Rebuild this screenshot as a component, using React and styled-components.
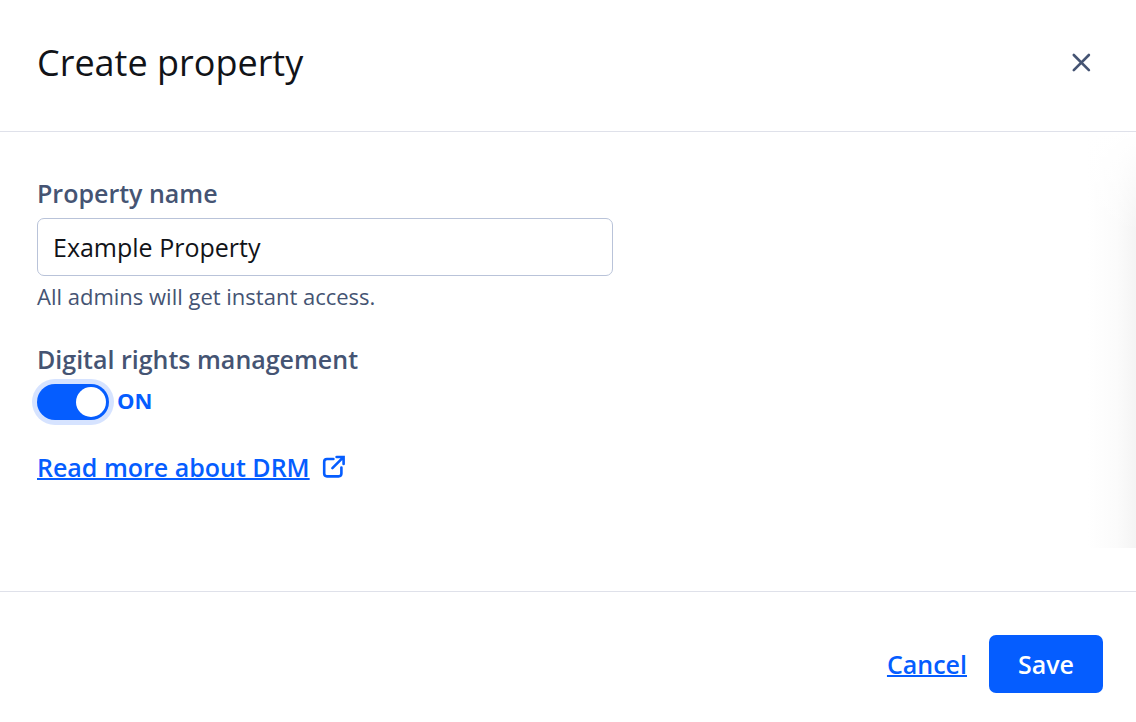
import React, { useState } from "react";
import styled, { createGlobalStyle, css } from "styled-components";

export default function App() {
  const [name, setName] = useState("Example Property");
  const [drm, setDrm] = useState(true);

  return (
    <>
      <GlobalStyle />
      <Panel onSubmit={(e) => e.preventDefault()}>
        <Header>
          <Title>Create property</Title>
          <CloseButton type="button" aria-label="Close">
            <svg width="20" height="20" viewBox="0 0 20 20" fill="none">
              <path
                d="M2.8 2L17.9 17.2M17.9 2L2.8 17.2"
                stroke="currentColor"
                strokeWidth="2.6"
                strokeLinecap="round"
              />
            </svg>
          </CloseButton>
        </Header>

        <Body>
          <Label htmlFor="property-name">Property name</Label>
          <TextInput
            id="property-name"
            value={name}
            onChange={(e) => setName(e.target.value)}
          />
          <Hint>All admins will get instant access.</Hint>

          <Label htmlFor="drm">Digital rights management</Label>
          <SwitchRow>
            <Switch
              id="drm"
              type="checkbox"
              role="switch"
              checked={drm}
              onChange={(e) => setDrm(e.target.checked)}
            />
            <SwitchState $on={drm}>{drm ? "ON" : "OFF"}</SwitchState>
          </SwitchRow>

          <DocsLink href="#drm">
            <span>Read more about DRM</span>
            <svg width="24" height="24" viewBox="0 0 24 24" fill="none">
              <path
                d="M11.4 4H5Q2.2 4 2.2 6.8V18.6Q2.2 21.4 5 21.4H16.6Q19.4 21.4 19.4 18.6V12.6M14.6 2H21.6V9M21.4 2.2L10.4 13.2"
                stroke="currentColor"
                strokeWidth="2.6"
                strokeLinecap="round"
              />
            </svg>
          </DocsLink>
        </Body>

        <Footer>
          <CancelLink href="#cancel">Cancel</CancelLink>
          <SaveButton type="submit">Save</SaveButton>
        </Footer>
      </Panel>
    </>
  );
}

const GlobalStyle = createGlobalStyle`
  * {
    box-sizing: border-box;
  }

  body {
    margin: 0;
    background: #ffffff;
    color: #111318;
    font-family: "Open Sans", sans-serif;
  }
`;

const Panel = styled.form`
  display: flex;
  flex-direction: column;
  min-height: 100vh;
`;

const Header = styled.header`
  display: flex;
  align-items: center;
  justify-content: space-between;
  padding: 37px 45px 42px 37px;
  border-bottom: 1px solid #dfe1ea;
`;

const Title = styled.h1`
  margin: 0;
  font-size: 36px;
  font-weight: 400;
  line-height: 52px;
`;

const CloseButton = styled.button`
  display: flex;
  padding: 0;
  border: 0;
  background: none;
  color: #455473;
  cursor: pointer;
`;

const Body = styled.main`
  display: flex;
  flex-direction: column;
  align-items: flex-start;
  flex: 1;
  padding: 44px 37px;
  background:
    linear-gradient(to bottom, #ffffff, #ffffff00) right top / 48px 100px no-repeat,
    linear-gradient(to left, #f4f4f4, #fbfbfb 40%, #ffffff) right top / 48px calc(100% - 43px) no-repeat;
`;

const Label = styled.label`
  color: #455473;
  font-size: 25px;
  font-weight: 600;
  line-height: 34px;
`;

const TextInput = styled.input`
  width: 576px;
  max-width: 100%;
  height: 58px;
  margin: 8px 0 6px;
  padding: 0 15px;
  border: 1px solid #b9c3d9;
  border-radius: 7px;
  background: #ffffff;
  color: #111318;
  font: inherit;
  font-size: 25px;
  outline: none;
`;

const Hint = styled.p`
  margin: 0 0 32px;
  color: #455473;
  font-size: 22px;
  line-height: 28px;
`;

const SwitchRow = styled.div`
  display: flex;
  align-items: flex-start;
  gap: 8px;
  margin: 8px 0 30px;
`;

const Switch = styled.input`
  display: flex;
  align-items: center;
  width: 72px;
  height: 36px;
  margin: 0;
  padding: 0 3px;
  appearance: none;
  border-radius: 18px;
  background: #055dff;
  box-shadow: 0 0 0 5px #d6e3ff;
  cursor: pointer;

  &::before {
    content: "";
    width: 30px;
    height: 30px;
    border-radius: 50%;
    background: #ffffff;
  }

  &:checked {
    justify-content: flex-end;
  }

  &:not(:checked) {
    background: #8891a8;
  }
`;

const SwitchState = styled.span`
  color: ${({ $on }) => ($on ? "#055dff" : "#455473")};
  font-size: 22px;
  font-weight: 700;
  line-height: 32px;
`;

const linkText = css`
  color: #055dff;
  font-size: 25px;
  font-weight: 600;
  line-height: 34px;
`;

const DocsLink = styled.a`
  ${linkText}
  display: flex;
  align-items: center;
  gap: 12px;
  text-decoration: none;

  span {
    text-decoration: underline;
    text-decoration-thickness: 2px;
  }
`;

const Footer = styled.footer`
  display: flex;
  align-items: center;
  justify-content: flex-end;
  gap: 22px;
  padding: 43px 33px 29px;
  border-top: 1px solid #dfe1ea;
`;

const CancelLink = styled.a`
  ${linkText}
  text-decoration-thickness: 2px;
`;

const SaveButton = styled.button`
  height: 58px;
  padding: 0 29px;
  border: 0;
  border-radius: 7px;
  background: #055dff;
  color: #ffffff;
  font: inherit;
  font-size: 25px;
  font-weight: 600;
  cursor: pointer;
`;
